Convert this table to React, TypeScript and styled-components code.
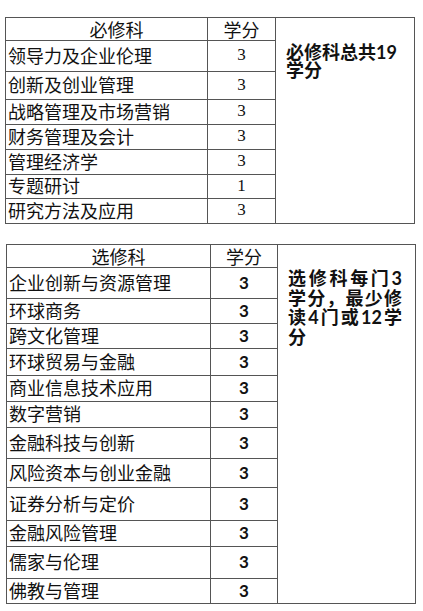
import React from "react";
import styled, { createGlobalStyle } from "styled-components";

type Course = { name: string; credit: number; h: number };

const REQUIRED: Course[] = [
  { name: "领导力及企业伦理", credit: 3, h: 31 },
  { name: "创新及创业管理", credit: 3, h: 28 },
  { name: "战略管理及市场营销", credit: 3, h: 25 },
  { name: "财务管理及会计", credit: 3, h: 25 },
  { name: "管理经济学", credit: 3, h: 25 },
  { name: "专题研讨", credit: 1, h: 24 },
  { name: "研究方法及应用", credit: 3, h: 25 },
];

const ELECTIVE: Course[] = [
  { name: "企业创新与资源管理", credit: 3, h: 31 },
  { name: "环球商务", credit: 3, h: 25 },
  { name: "跨文化管理", credit: 3, h: 25 },
  { name: "环球贸易与金融", credit: 3, h: 27 },
  { name: "商业信息技术应用", credit: 3, h: 26 },
  { name: "数字营销", credit: 3, h: 26 },
  { name: "金融科技与创新", credit: 3, h: 31 },
  { name: "风险资本与创业金融", credit: 3, h: 29 },
  { name: "证券分析与定价", credit: 3, h: 33 },
  { name: "金融风险管理", credit: 3, h: 26 },
  { name: "儒家与伦理", credit: 3, h: 32 },
  { name: "佛教与管理", credit: 3, h: 25 },
];

const GlobalStyle = createGlobalStyle`
  body {
    margin: 0;
    background: #fff;
    color: #111;
    font-family: "Noto Sans CJK SC", "Noto Sans", sans-serif;
  }
`;

const Page = styled.div`
  display: flex;
  flex-direction: column;
  gap: 20px;
  padding-top: 17px;
`;

const Table = styled.table<{ $left: number }>`
  margin-left: ${(p) => p.$left}px;
  width: 409px;
  table-layout: fixed;
  border-collapse: collapse;
  border: 1px solid #666;

  td,
  th {
    border: 1px solid #555;
    padding: 0;
  }
`;

const Col = styled.col<{ $w: number }>`
  width: ${(p) => p.$w}px;
`;

const Row = styled.tr<{ $h: number }>`
  height: ${(p) => p.$h}px;
`;

const HeadCell = styled.th<{ $shift?: number }>`
  font-size: 18px;
  font-weight: 400;
  line-height: 20px;
  text-align: center;
  vertical-align: middle;
  padding-left: ${(p) => p.$shift ?? 0}px !important;
`;

const NameCell = styled.td`
  font-size: 18px;
  line-height: 20px;
  text-align: left;
  vertical-align: middle;
  white-space: nowrap;
  padding: 0 0 3px 2px !important;
`;

const CreditCell = styled.td<{ $bold?: boolean }>`
  font-family: ${(p) =>
    p.$bold ? '"Lato", "Liberation Sans", sans-serif' : '"Liberation Serif", serif'};
  font-weight: ${(p) => (p.$bold ? 700 : 400)};
  font-size: 17px;
  text-align: center;
  vertical-align: middle;
  padding-bottom: 2px !important;
`;

const NoteCell = styled.td<{ $justify?: boolean; $top: number; $lh: number }>`
  vertical-align: top;
  padding: ${(p) => p.$top}px 13px 0 10px !important;
  font-family: "Lato", "Noto Sans CJK SC", sans-serif;
  font-weight: 700;
  font-size: 18px;
  line-height: ${(p) => p.$lh}px;
  text-align: ${(p) => (p.$justify ? "justify" : "left")};
`;

type SectionProps = {
  title: string;
  courses: Course[];
  note: string;
  left: number;
  cols: [number, number, number];
  bold?: boolean;
  justify?: boolean;
  noteTop: number;
  noteLh: number;
};

const Section = ({
  title,
  courses,
  note,
  left,
  cols,
  bold,
  justify,
  noteTop,
  noteLh,
}: SectionProps) => (
  <Table $left={left}>
    <colgroup>
      {cols.map((w, i) => (
        <Col key={i} $w={w} />
      ))}
    </colgroup>
    <tbody>
      <Row $h={23}>
        <HeadCell $shift={20}>{title}</HeadCell>
        <HeadCell>学分</HeadCell>
        <NoteCell
          rowSpan={courses.length + 1}
          $justify={justify}
          $top={noteTop}
          $lh={noteLh}
        >
          {note}
        </NoteCell>
      </Row>
      {courses.map((c) => (
        <Row key={c.name} $h={c.h}>
          <NameCell>{c.name}</NameCell>
          <CreditCell $bold={bold}>{c.credit}</CreditCell>
        </Row>
      ))}
    </tbody>
  </Table>
);

const App = () => (
  <>
    <GlobalStyle />
    <Page>
      <Section
        title="必修科"
        courses={REQUIRED}
        note="必修科总共19学分"
        left={5}
        cols={[202, 68, 139]}
        noteTop={25}
        noteLh={18}
      />
      <Section
        title="选修科"
        courses={ELECTIVE}
        note="选修科每门3学分，最少修读4门或12学分"
        left={6}
        cols={[204, 67, 138]}
        bold
        justify
        noteTop={24}
        noteLh={19.5}
      />
    </Page>
  </>
);

export default App;
